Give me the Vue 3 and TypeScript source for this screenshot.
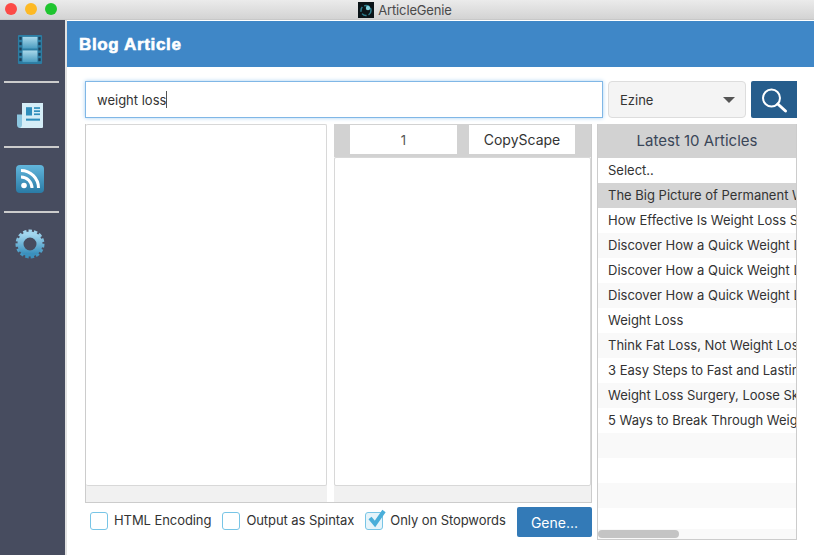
<script setup lang="ts">
const articles: string[] = [
  'Select..',
  'The Big Picture of Permanent Weight Loss',
  'How Effective Is Weight Loss Surgery',
  'Discover How a Quick Weight Loss Plan',
  'Discover How a Quick Weight Loss Diet',
  'Discover How a Quick Weight Loss Tip',
  'Weight Loss',
  'Think Fat Loss, Not Weight Loss Today',
  '3 Easy Steps to Fast and Lasting Results',
  'Weight Loss Surgery, Loose Skin Removal',
  '5 Ways to Break Through Weight Plateaus',
  '',
  '',
  '',
  ''
]
</script>

<template>
  <div class="window">
    <header class="titlebar">
      <div class="lights">
        <span class="light red"></span>
        <span class="light yellow"></span>
        <span class="light green"></span>
      </div>
      <div class="title">
        <svg class="app-icon" width="16" height="16" viewBox="0 0 16 16">
          <rect width="16" height="16" fill="#0b1418" />
          <circle cx="8" cy="8.5" r="5" fill="none" stroke="#2f7f8f" stroke-width="1.5" stroke-dasharray="5 2" />
          <circle cx="10" cy="6" r="2.2" fill="#7fd0dc" />
        </svg>
        <span>ArticleGenie</span>
      </div>
    </header>

    <div class="main">
      <nav class="sidebar">
        <div class="nav-item">
          <svg width="26" height="31" viewBox="0 0 28 32" preserveAspectRatio="none">
            <defs>
              <linearGradient id="film" x1="0" y1="0" x2="0" y2="1">
                <stop offset="0" stop-color="#a9d8ea" />
                <stop offset="1" stop-color="#4a9cc0" />
              </linearGradient>
            </defs>
            <rect x="1" y="1" width="26" height="30" rx="1" fill="#2c7da3" />
            <rect x="6" y="3" width="16" height="12" fill="url(#film)" />
            <rect x="6" y="17" width="16" height="12" fill="url(#film)" />
            <g fill="#1d3f58">
              <rect x="2.5" y="3" width="2.5" height="3" />
              <rect x="2.5" y="8.5" width="2.5" height="3" />
              <rect x="2.5" y="14" width="2.5" height="3" />
              <rect x="2.5" y="19.5" width="2.5" height="3" />
              <rect x="2.5" y="25" width="2.5" height="3" />
              <rect x="23" y="3" width="2.5" height="3" />
              <rect x="23" y="8.5" width="2.5" height="3" />
              <rect x="23" y="14" width="2.5" height="3" />
              <rect x="23" y="19.5" width="2.5" height="3" />
              <rect x="23" y="25" width="2.5" height="3" />
            </g>
          </svg>
        </div>
        <div class="divider"></div>
        <div class="nav-item news">
          <svg width="28" height="27" viewBox="0 0 28 26" preserveAspectRatio="none">
            <path d="M1 12 H6 V25 H4 Q1 25 1 22 Z" fill="#8cc6e0" />
            <path d="M6 1 H27 V24 Q27 25 26 25 H3 Q6 25 6 22 Z" fill="#d5edf7" />
            <g fill="#2f8dbb">
              <rect x="10" y="5" width="6" height="8" />
              <rect x="18" y="5" width="6" height="1.6" />
              <rect x="18" y="8" width="6" height="1.6" />
              <rect x="18" y="11" width="6" height="1.6" />
              <rect x="10" y="16" width="14" height="2" />
            </g>
          </svg>
        </div>
        <div class="divider"></div>
        <div class="nav-item">
          <svg width="28" height="28" viewBox="0 0 28 28">
            <defs>
              <linearGradient id="rss" x1="0" y1="0" x2="0" y2="1">
                <stop offset="0" stop-color="#62b6dc" />
                <stop offset="1" stop-color="#2a7ba6" />
              </linearGradient>
            </defs>
            <rect width="28" height="28" rx="4" fill="url(#rss)" />
            <circle cx="8" cy="20.5" r="2.8" fill="#fff" />
            <path d="M5 12 A11 11 0 0 1 16 23" fill="none" stroke="#fff" stroke-width="3" />
            <path d="M5 5.5 A17.5 17.5 0 0 1 22.5 23" fill="none" stroke="#fff" stroke-width="3" />
          </svg>
        </div>
        <div class="divider"></div>
        <div class="nav-item">
          <svg width="30" height="30" viewBox="0 0 30 30">
            <defs>
              <linearGradient id="gear" x1="0" y1="0" x2="0" y2="1">
                <stop offset="0" stop-color="#a2d6ee" />
                <stop offset="1" stop-color="#3a90bd" />
              </linearGradient>
            </defs>
            <circle cx="15" cy="15" r="13" fill="none" stroke="url(#gear)" stroke-width="3" stroke-dasharray="3.4 2" />
            <circle cx="15" cy="15" r="9.5" fill="none" stroke="url(#gear)" stroke-width="6" />
          </svg>
        </div>
      </nav>

      <section class="content">
        <div class="page-head">Blog Article</div>
        <div class="page-body">
          <div class="search-row">
            <div class="search-input">weight loss<span class="caret"></span></div>
            <div class="select">
              <span>Ezine</span>
              <span class="arrow"></span>
            </div>
            <button class="search-btn" type="button" aria-label="Search">
              <svg width="30" height="30" viewBox="0 0 30 30" fill="none" stroke="#fff">
                <circle cx="12.5" cy="13" r="8.5" stroke-width="2" />
                <path d="M18.8 19 L26.5 26" stroke-width="3" stroke-linecap="round" />
              </svg>
            </button>
          </div>

          <div class="columns">
            <div class="left-area">
              <div class="editors">
                <div class="editor-col first">
                  <div class="editor-box"></div>
                  <div class="editor-foot"></div>
                </div>
                <div class="gap-strip"></div>
                <div class="editor-col second">
                  <div class="tabs">
                    <div class="tab num">1</div>
                    <div class="tab">CopyScape</div>
                  </div>
                  <div class="editor-box"></div>
                  <div class="editor-foot"></div>
                </div>
              </div>
              <div class="options">
                <label class="check"><span class="box"></span><span class="label">HTML Encoding</span></label>
                <label class="check"><span class="box"></span><span class="label">Output as Spintax</span></label>
                <label class="check third">
                  <span class="box checked">
                    <svg class="tick" width="20" height="20" viewBox="0 0 20 20">
                      <path d="M4 9 L9 15 L18 2" fill="none" stroke="#4aaed9" stroke-width="4" />
                    </svg>
                  </span>
                  <span class="label">Only on Stopwords</span>
                </label>
                <button class="gen-btn" type="button">Gene...</button>
              </div>
            </div>

            <aside class="list-panel">
              <div class="list-head">Latest 10 Articles</div>
              <div class="list-rows">
                <div
                  v-for="(a, i) in articles"
                  :key="i"
                  class="row"
                  :class="{ odd: i % 2 === 1, selected: i === 1 }"
                >{{ a }}</div>
              </div>
              <div class="hscroll"><span class="thumb"></span></div>
            </aside>
          </div>
        </div>
      </section>
    </div>
  </div>
</template>

<style>
html, body { margin: 0; background: #fff; overflow: hidden; }
</style>

<style scoped>
.window {
  width: 814px;
  height: 555px;
  display: flex;
  flex-direction: column;
  overflow: hidden;
  font-family: Inter, "Liberation Sans", sans-serif;
  font-size: 13px;
  color: #333;
}
.titlebar {
  height: 19px;
  flex: none;
  position: relative;
  display: flex;
  align-items: center;
  justify-content: center;
  background: linear-gradient(#ebebeb, #d3d3d3);
  border-bottom: 1px solid #c8c8c8;
}
.lights {
  position: absolute;
  left: 5px;
  top: 3px;
  display: flex;
  gap: 8px;
}
.light { width: 12px; height: 12px; border-radius: 50%; }
.red { background: #fc4a46; }
.yellow { background: #fdb924; }
.green { background: #1fc52f; }
.title {
  display: flex;
  align-items: center;
  gap: 4px;
  color: #4a4a4a;
  font-size: 13px;
  letter-spacing: -0.15px;
  margin-right: 4px;
}
.main { flex: 1; display: flex; min-height: 0; }
.sidebar {
  width: 65px;
  flex: none;
  background: #474c5f;
  display: flex;
  flex-direction: column;
  align-items: center;
  padding: 13px 5px 0 0;
  box-sizing: border-box;
}
.nav-item {
  height: 32px;
  display: flex;
  align-items: center;
  justify-content: center;
}
.nav-item.news { padding-top: 3px; height: 29px; }
.divider {
  width: 55px;
  height: 2px;
  background: #ccc;
  margin: 16px 0 15px 3px;
}
.content {
  flex: 1;
  display: flex;
  flex-direction: column;
  min-width: 0;
  border-left: 2px solid #e2e2e2;
}
.page-head {
  height: 46px;
  flex: none;
  margin-top: 1px;
  background: #3f87c7;
  color: #fff;
  font-family: "Liberation Sans", sans-serif;
  font-weight: 700;
  font-size: 17px;
  letter-spacing: 0.65px;
  -webkit-text-stroke: 0.6px #fff;
  display: flex;
  align-items: center;
  padding: 2px 0 0 12px;
  box-sizing: border-box;
}
.page-body { flex: 1; padding: 14px 17px 15px 18px; min-height: 0; display: flex; flex-direction: column; gap: 6px; }
.search-row { display: flex; gap: 5px; height: 37px; flex: none; }
.search-input {
  flex: 1;
  border: 1px solid #80b7e6;
  box-shadow: 0 0 4px #a8d0f2;
  display: flex;
  align-items: center;
  padding-left: 11px;
  color: #333;
}
.caret { width: 1px; height: 17px; background: #555; margin-left: 0; }
.select {
  width: 138px;
  box-sizing: border-box;
  background: #f4f4f4;
  border: 1px solid #ddd;
  border-radius: 4px;
  display: flex;
  align-items: center;
  justify-content: space-between;
  padding: 0 10px 0 11px;
}
.arrow {
  width: 0;
  height: 0;
  border-left: 6px solid transparent;
  border-right: 6px solid transparent;
  border-top: 6px solid #555;
}
.search-btn {
  width: 46px;
  padding: 0;
  border: none;
  background: #265d8c;
  border-radius: 2px 0 0 2px;
  display: flex;
  align-items: center;
  justify-content: center;
}
.columns { flex: 1; display: flex; gap: 5px; min-height: 0; }
.left-area { width: 507px; flex: none; display: flex; flex-direction: column; }
.editors {
  height: 379px;
  flex: none;
  display: flex;
  background: #f1f1f1;
  border-bottom: 1px solid #ccc;
  border-left: 1px solid #ccc;
  box-sizing: border-box;
}
.editor-col { display: flex; flex-direction: column; }
.editor-col.first { width: 241px; }
.gap-strip { width: 7px; background: #fff; }
.editor-col.second { flex: 1; border-right: 1px solid #ccc; }
.editor-box {
  flex: 1;
  background: #fff;
  border: 1px solid #d8d8d8;
  border-left: none;
  border-radius: 2px;
}
.second .editor-box { border-left: 1px solid #d8d8d8; }
.editor-foot { height: 16px; flex: none; background: #f1f1f1; }
.tabs {
  height: 33px;
  flex: none;
  display: flex;
  gap: 12px;
  background: #d2d2d2;
  padding: 1px 16px 3px 16px;
  box-sizing: border-box;
}
.tab {
  flex: 1;
  background: #fff;
  display: flex;
  align-items: center;
  justify-content: center;
  font-size: 14px;
}
.tab.num { flex: 0 0 107px; font-size: 13px; color: #555; }
.options { flex: 1; display: flex; align-items: flex-start; padding: 4px 0 0 5px; min-height: 0; }
.check {
  display: flex;
  align-items: center;
  gap: 6px;
  height: 28px;
  margin-right: 11px;
  white-space: nowrap;
  letter-spacing: -0.07px;
}
.label { margin-bottom: 2px; }
.third { margin-right: 0; gap: 7px; }
.box {
  width: 16px;
  height: 16px;
  position: relative;
  border: 1px solid #78c5e6;
  border-radius: 3px;
  flex: none;
}
.box.checked { background: #e6f4fa; }
.tick { position: absolute; left: 0; top: -4px; }
.gen-btn {
  width: 75px;
  height: 30px;
  margin-left: auto;
  border: none;
  border-radius: 2px;
  background: #337ab7;
  color: #fff;
  font-family: inherit;
  font-size: 14px;
}
.list-panel {
  flex: 1;
  min-width: 0;
  position: relative;
  border: 1px solid #ccc;
  border-top: none;
  overflow: hidden;
  box-sizing: border-box;
  display: flex;
  flex-direction: column;
}
.list-head {
  height: 34px;
  flex: none;
  padding-bottom: 2px;
  box-sizing: border-box;
  background: #d2d2d2;
  display: flex;
  align-items: center;
  justify-content: center;
  font-size: 15px;
  color: #3a4658;
}
.list-rows { flex: 1; overflow: hidden; }
.row {
  height: 25px;
  line-height: 25px;
  padding-left: 10px;
  white-space: nowrap;
  overflow: hidden;
  background: #fff;
  font-size: 13px;
}
.row.odd { background: #f9f9f9; }
.row.selected { background: #d4d4d4; }
.hscroll {
  position: absolute;
  left: 0;
  right: 0;
  bottom: 0;
  height: 10px;
  background: #f9f9f9;
}
.thumb {
  position: absolute;
  left: 0;
  top: 1px;
  width: 81px;
  height: 8px;
  background: #c4c4c4;
  border-radius: 4px;
}
</style>
